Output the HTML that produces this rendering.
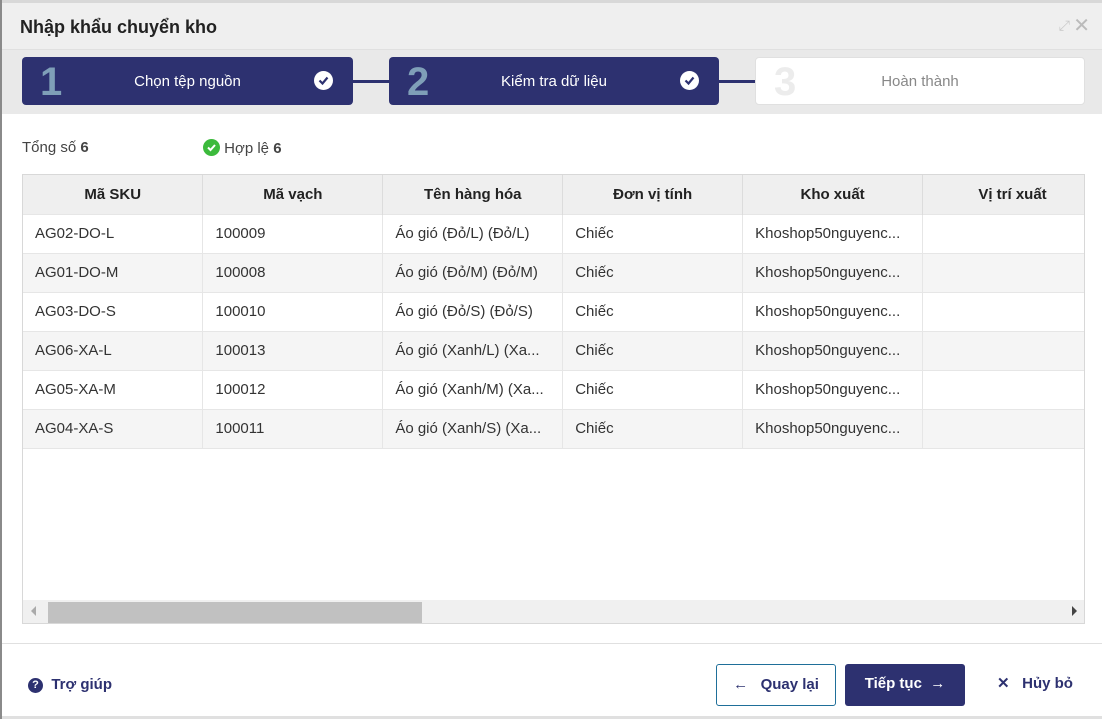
<!DOCTYPE html>
<html><head><meta charset="utf-8"><style>
*{box-sizing:border-box;margin:0;padding:0}
body{width:1102px;height:719px;overflow:hidden;background:#fff;font-family:"Liberation Sans",Arial,sans-serif;color:#333;position:relative}
.frame{position:absolute;left:0;top:0;width:2px;height:719px;background:#8a8a8a}
.topline{position:absolute;left:0;top:0;width:1102px;height:3px;background:#d8d8d8}
.head{position:absolute;left:2px;top:3px;width:1100px;height:47px;background:#efefef;border-bottom:1px solid #e0e0e0}
.head h1{position:absolute;left:18px;top:14px;font-size:18px;font-weight:bold;color:#222}
.steps{position:absolute;left:2px;top:50px;width:1100px;height:64px;background:#e9e9e9}
.step{position:absolute;top:7px;height:48px;border-radius:4px;background:#2d3170;color:#fff}
.step .n{position:absolute;left:18px;top:3px;font-size:40px;font-weight:bold;color:#7f9fb8}
.step .t{position:absolute;left:0;right:0;top:16px;text-align:center;font-size:15px}
.step .c{position:absolute;right:20px;top:14px;width:19px;height:19px;border-radius:50%;background:#fff}
.line{position:absolute;top:30px;height:3px;background:#2d3170}
.sum{position:absolute;top:139px;font-size:15px;color:#444}
.clip{position:absolute;left:23px;top:175px;width:1061px;height:425px;overflow:hidden}
table{position:absolute;left:0;top:0;width:1080px;border-collapse:collapse;font-size:15px;table-layout:fixed}
th{height:39px;background:#efefef;font-weight:bold;color:#222;border-right:1px solid #dcdcdc;text-align:center}
td{height:39px;padding-left:12px;color:#333;border-right:1px solid #e6e6e6;border-top:1px solid #e6e6e6;white-space:nowrap;overflow:hidden}
tr:nth-child(odd) td{background:#f5f5f5}
.box{position:absolute;left:22px;top:174px;width:1063px;height:450px;border:1px solid #d8d8d8}
.sb{position:absolute;left:23px;top:600px;width:1061px;height:23px;background:#f0f0f0}
.thumb{position:absolute;left:48px;top:602px;width:374px;height:21px;background:#c1c1c1}
.foot{position:absolute;left:2px;top:643px;width:1100px;border-top:1px solid #e0e0e0}
.btn{position:absolute;top:664px;height:42px;border-radius:3px;font-size:15px;font-weight:bold;line-height:40px;text-align:center}
</style></head><body>
<div class="topline"></div>
<div class="head"><h1>Nhập khẩu chuyển kho</h1>
<div style="position:absolute;right:32px;top:14px;color:#c8c8c8;font-size:14px">⤢</div>
<div style="position:absolute;right:12px;top:10px;color:#bbb;font-size:20px">✕</div></div>
<div class="frame"></div>
<div class="steps">
<div class="step" style="left:20px;width:331px"><span class="n">1</span><span class="t">Chọn tệp nguồn</span><span class="c"><svg width="19" height="19"><path d="M5.5 9.5l3 3 5-6" stroke="#2d3170" stroke-width="2.2" fill="none"/></svg></span></div>
<div class="line" style="left:351px;width:37px"></div>
<div class="step" style="left:387px;width:330px"><span class="n">2</span><span class="t">Kiểm tra dữ liệu</span><span class="c"><svg width="19" height="19"><path d="M5.5 9.5l3 3 5-6" stroke="#2d3170" stroke-width="2.2" fill="none"/></svg></span></div>
<div class="line" style="left:717px;width:37px"></div>
<div class="step" style="left:753px;width:330px;background:#fff;border:1px solid #e0e0e0"><span class="n" style="color:#ececec;top:2px">3</span><span class="t" style="color:#888;top:15px">Hoàn thành</span></div>
</div>
<div class="sum" style="left:22px">Tổng số <b>6</b></div>
<div class="sum" style="left:203px"><span style="display:inline-block;width:17px;height:17px;border-radius:50%;background:#3cba3c;vertical-align:-3px;position:relative"><svg width="17" height="17" style="position:absolute;left:0;top:0"><path d="M5 8.5l2.5 2.5 4.5-5" stroke="#fff" stroke-width="2" fill="none"/></svg></span> Hợp lệ <b>6</b></div>
<div class="box"></div>
<div class="clip">
<table>
<tr><th>Mã SKU</th><th>Mã vạch</th><th>Tên hàng hóa</th><th>Đơn vị tính</th><th>Kho xuất</th><th>Vị trí xuất</th></tr>
<tr><td>AG02-DO-L</td><td>100009</td><td>Áo gió (Đỏ/L) (Đỏ/L)</td><td>Chiếc</td><td>Khoshop50nguyenc...</td><td></td></tr>
<tr><td>AG01-DO-M</td><td>100008</td><td>Áo gió (Đỏ/M) (Đỏ/M)</td><td>Chiếc</td><td>Khoshop50nguyenc...</td><td></td></tr>
<tr><td>AG03-DO-S</td><td>100010</td><td>Áo gió (Đỏ/S) (Đỏ/S)</td><td>Chiếc</td><td>Khoshop50nguyenc...</td><td></td></tr>
<tr><td>AG06-XA-L</td><td>100013</td><td>Áo gió (Xanh/L) (Xa...</td><td>Chiếc</td><td>Khoshop50nguyenc...</td><td></td></tr>
<tr><td>AG05-XA-M</td><td>100012</td><td>Áo gió (Xanh/M) (Xa...</td><td>Chiếc</td><td>Khoshop50nguyenc...</td><td></td></tr>
<tr><td style="border-bottom:1px solid #e6e6e6">AG04-XA-S</td><td style="border-bottom:1px solid #e6e6e6">100011</td><td style="border-bottom:1px solid #e6e6e6">Áo gió (Xanh/S) (Xa...</td><td style="border-bottom:1px solid #e6e6e6">Chiếc</td><td style="border-bottom:1px solid #e6e6e6">Khoshop50nguyenc...</td><td style="border-bottom:1px solid #e6e6e6"></td></tr>
</table>
</div>
<div class="sb"></div><div class="thumb"></div>
<div style="position:absolute;left:31px;top:606px;width:0;height:0;border-top:5px solid transparent;border-bottom:5px solid transparent;border-right:5px solid #aaa"></div>
<div style="position:absolute;left:1072px;top:606px;width:0;height:0;border-top:5px solid transparent;border-bottom:5px solid transparent;border-left:5px solid #444"></div>
<div class="foot"></div>
<div style="position:absolute;left:28px;top:676px;font-size:15px;font-weight:bold;color:#2d3170"><span style="display:inline-block;width:15px;height:15px;border-radius:50%;background:#2d3170;color:#fff;font-size:11px;text-align:center;line-height:15px;vertical-align:1px">?</span>&nbsp; Trợ giúp</div>
<div class="btn" style="left:716px;width:120px;border:1px solid #1f6f99;color:#2d3170">←&nbsp;&nbsp; Quay lại</div>
<div class="btn" style="left:845px;width:120px;background:#2d3170;color:#fff">Tiếp tục &nbsp;→</div>
<div class="btn" style="left:985px;width:100px;color:#2d3170">✕&nbsp;&nbsp; Hủy bỏ</div>
<div style="position:absolute;left:2px;top:716px;width:1100px;height:3px;background:#e0e0e0"></div>
</body></html>
